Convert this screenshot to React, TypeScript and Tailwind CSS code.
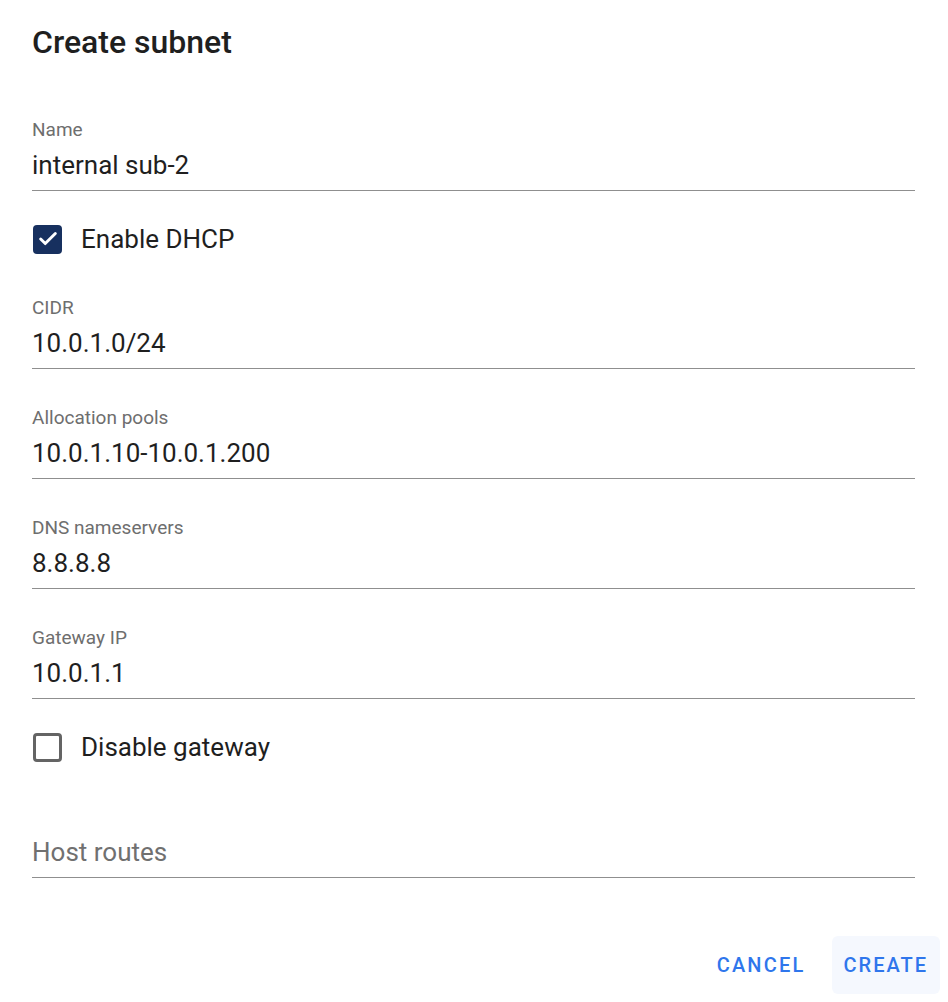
import { Check } from "lucide-react"

const font = { fontFamily: "Roboto, 'Liberation Sans', sans-serif" }

function Field({ label, value, placeholder }: { label?: string; value?: string; placeholder?: string }) {
  return (
    <div className="border-b border-[#8f8f8f]">
      <div className="h-6 text-[19px] leading-6 text-[#6e6e6e]">{label}</div>
      <div className="mt-[5px] pb-[7px] text-[26px] leading-9">
        {value ? <span className="text-[#1f1f1f]">{value}</span> : <span className="text-[#707070]">{placeholder}</span>}
      </div>
    </div>
  )
}

function CheckRow({ label, checked }: { label: string; checked?: boolean }) {
  return (
    <div className="flex h-12 items-center gap-[19px] pl-px">
      {checked ? (
        <span className="flex h-[29px] w-[29px] items-center justify-center rounded-[4px] bg-[#17305f]">
          <Check className="h-[22px] w-[22px] text-white" strokeWidth={3.2} />
        </span>
      ) : (
        <span className="h-[29px] w-[29px] rounded-[4px] border-[3px] border-[#646464]" />
      )}
      <span className="text-[26px] text-[#1f1f1f]">{label}</span>
    </div>
  )
}

export default function App() {
  return (
    <div className="h-[1002px] w-[948px] overflow-hidden bg-white" style={font}>
      <div className="pl-8 pr-[33px]">
        <h1 className="pt-[22px] text-[32px] font-medium leading-10 text-[#1f1f1f]">Create subnet</h1>
        <div className="mt-[56px]">
          <Field label="Name" value="internal sub-2" />
        </div>
        <div className="mt-6">
          <CheckRow label="Enable DHCP" checked />
        </div>
        <div className="mt-[33px] flex flex-col gap-[37px]">
          <Field label="CIDR" value="10.0.1.0/24" />
          <Field label="Allocation pools" value="10.0.1.10-10.0.1.200" />
          <Field label="DNS nameservers" value="8.8.8.8" />
          <Field label="Gateway IP" value="10.0.1.1" />
        </div>
        <div className="mt-[24px]">
          <CheckRow label="Disable gateway" />
        </div>
        <div className="mt-[34px]">
          <Field placeholder="Host routes" />
        </div>
      </div>
      <div className="mt-[58px] flex justify-end gap-[14px] pr-2">
        <button className="h-[58px] rounded-[6px] px-[12px] text-[20px] font-medium tracking-[2.2px] text-[#2f76ec]">CANCEL</button>
        <button className="h-[58px] rounded-[6px] bg-[#f5f8fe] px-[12px] text-[20px] font-medium tracking-[2px] text-[#2f76ec]">CREATE</button>
      </div>
    </div>
  )
}
